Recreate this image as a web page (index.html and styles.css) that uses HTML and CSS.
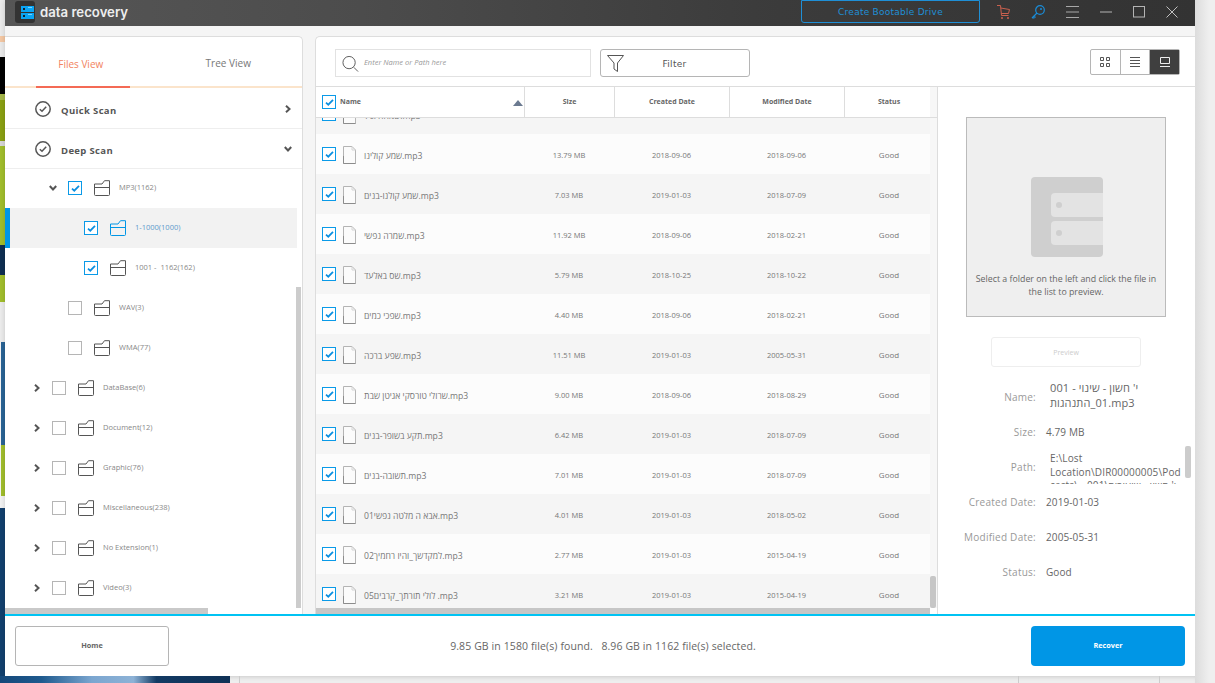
FILE: index.html
```html
<!DOCTYPE html>
<html lang="en">
<head>
<meta charset="utf-8">
<title>Data Recovery</title>
<link rel="stylesheet" href="styles.css">
</head>
<body>
<svg class="sprite" aria-hidden="true">
  <symbol id="folder" viewBox="0 0 16 16"><path d="M.5 4H8L10.5.7H15.5V14.5a1 1 0 0 1-1 1H1.500a1 1 0 0 1-1-1ZM.5 7.500H15.500" fill="none" stroke="currentColor"/></symbol>
  <symbol id="file" viewBox="0 0 13 18"><path d="M.5.5H9L12.500 4V17.500H.5Z" fill="#fbfbfb" stroke="#b4b4b4"/><path d="M.5 10V17.500H12.500" fill="none" stroke="#8c8c8c"/><path d="M9 .5V4H12.500" fill="none" stroke="#d4d4d4"/></symbol>
  <symbol id="tick" viewBox="0 0 10 8"><path d="M1 4.200 3.600 6.500 9 1" fill="none" stroke="currentColor" stroke-width="2"/></symbol>
  <symbol id="chev-r" viewBox="0 0 6 8"><path d="M1 .8 4.500 4 1 7.200" fill="none" stroke="currentColor" stroke-width="2"/></symbol>
  <symbol id="chev-d" viewBox="0 0 8 6"><path d="M.8 1 4 4.500 7.200 1" fill="none" stroke="currentColor" stroke-width="2"/></symbol>
  <symbol id="done" viewBox="0 0 16 16"><circle cx="8" cy="8" r="7.200" fill="none" stroke="currentColor" stroke-width="1.500"/><path d="M4.800 8.300 7 10.300 11.200 5.800" fill="none" stroke="currentColor" stroke-width="1.500"/></symbol>
</svg>

<div class="desktop">
  <div class="wall">
    <i class="w1"></i><i class="w2"></i><i class="w3"></i><i class="w4"></i><i class="w5"></i><i class="w6"></i><i class="w7"></i><i class="w8"></i><i class="w9"></i><i class="w10"></i><i class="w11"></i><i class="w12"></i><i class="w13"></i><i class="w14"></i><i class="w15"></i>
  </div>

  <div class="window">
    <header class="titlebar">
      <div class="logo">
        <svg width="13" height="13" viewBox="0 0 13 13"><rect width="13" height="6" fill="#0aa5f5"/><rect y="7" width="13" height="6" fill="#0aa5f5"/><rect x="2" y="2" width="2" height="2" fill="#123"/><rect x="2" y="9" width="2" height="2" fill="#123"/><rect x="7" y="1" width="4" height="1" fill="#7cd0f8"/><rect x="7" y="8" width="4" height="1" fill="#7cd0f8"/></svg>
      </div>
      <span class="brand">data recovery</span>
      <button class="bootable">Create Bootable Drive</button>
      <div class="tools">
        <svg class="tool" width="13" height="14" viewBox="0 0 13 14"><path d="M0 .5H3.500L4.500 10.500H11.500M3.700 3 12.500 4.500 11.500 8.500 4.300 8.500" fill="none" stroke="#c9604e"/><path d="M4 13H6M10 13H12" stroke="#c9604e" stroke-width="1.500"/></svg>
        <svg class="tool" width="14" height="14" viewBox="0 0 14 14"><circle cx="9" cy="5" r="4.300" fill="none" stroke="#1a8cd8" stroke-width="1.200"/><circle cx="10" cy="4" r="1" fill="#1a8cd8"/><path d="M6 8 1 13M1 13H3.500M3 11 4.500 12.500" fill="none" stroke="#1a8cd8" stroke-width="1.200"/></svg>
        <svg class="tool" width="13" height="12" viewBox="0 0 13 12"><path d="M0 .5H13M0 6H13M0 11.500H13" stroke="#a8a8a8"/></svg>
        <svg class="tool" width="12" height="12" viewBox="0 0 12 12"><path d="M0 6H12" stroke="#b4b4b4"/></svg>
        <svg class="tool" width="12" height="12" viewBox="0 0 12 12"><rect x=".5" y=".5" width="11" height="10.500" fill="none" stroke="#b4b4b4"/></svg>
        <svg class="tool" width="12" height="12" viewBox="0 0 12 12"><path d="M.5.5 11.500 11.500M11.500.5.5 11.500" stroke="#c0c0c0"/></svg>
      </div>
    </header>

    <main class="main">
      <aside class="side">
        <div class="tabs">
          <div class="tab active">Files View</div>
          <div class="tab">Tree View</div>
        </div>
        <div class="scan"><svg class="scan-ico"><use href="#done"/></svg><b>Quick Scan</b><svg class="scan-chev-r"><use href="#chev-r"/></svg></div>
        <div class="scan"><svg class="scan-ico"><use href="#done"/></svg><b>Deep Scan</b><svg class="scan-chev-d"><use href="#chev-d"/></svg></div>
        <div class="tree">
          <div class="node lv2"><svg class="arrow-d"><use href="#chev-d"/></svg><span class="cb on"><svg><use href="#tick"/></svg></span><svg class="fold"><use href="#folder"/></svg><span>MP3(1162)</span></div>
          <div class="node lv3 sel"><span class="cb on"><svg><use href="#tick"/></svg></span><svg class="fold"><use href="#folder"/></svg><span>1-1000(1000)</span></div>
          <div class="node lv3"><span class="cb on"><svg><use href="#tick"/></svg></span><svg class="fold"><use href="#folder"/></svg><span>1001 -&nbsp; 1162(162)</span></div>
          <div class="node lv2"><span class="cb"></span><svg class="fold"><use href="#folder"/></svg><span>WAV(3)</span></div>
          <div class="node lv2"><span class="cb"></span><svg class="fold"><use href="#folder"/></svg><span>WMA(77)</span></div>
          <div class="node lv1"><svg class="arrow-r"><use href="#chev-r"/></svg><span class="cb"></span><svg class="fold"><use href="#folder"/></svg><span>DataBase(6)</span></div>
          <div class="node lv1"><svg class="arrow-r"><use href="#chev-r"/></svg><span class="cb"></span><svg class="fold"><use href="#folder"/></svg><span>Document(12)</span></div>
          <div class="node lv1"><svg class="arrow-r"><use href="#chev-r"/></svg><span class="cb"></span><svg class="fold"><use href="#folder"/></svg><span>Graphic(76)</span></div>
          <div class="node lv1"><svg class="arrow-r"><use href="#chev-r"/></svg><span class="cb"></span><svg class="fold"><use href="#folder"/></svg><span>Miscellaneous(238)</span></div>
          <div class="node lv1"><svg class="arrow-r"><use href="#chev-r"/></svg><span class="cb"></span><svg class="fold"><use href="#folder"/></svg><span>No Extension(1)</span></div>
          <div class="node lv1"><svg class="arrow-r"><use href="#chev-r"/></svg><span class="cb"></span><svg class="fold"><use href="#folder"/></svg><span>Video(3)</span></div>
          <div class="tree-thumb"></div>
        </div>
        <div class="side-hbar"></div>
      </aside>

      <section class="content">
        <div class="toolbar">
          <div class="search">
            <svg width="17" height="18" viewBox="0 0 18 18"><circle cx="7.500" cy="7.500" r="6.500" fill="none" stroke="#555"/><path d="M12.500 12.500 17 17" stroke="#555"/></svg>
            <span>Enter Name or Path here</span>
          </div>
          <button class="filter">
            <svg width="17" height="17" viewBox="0 0 17 17"><path d="M.5.5H16.500L10.500 8V16.500L7 14V8Z" fill="none" stroke="#555"/></svg>
            <span>Filter</span>
          </button>
          <div class="views">
            <div class="view"><svg width="10" height="10" viewBox="0 0 10 10"><path d="M.5.5H3.500V3.500H.5ZM6.500.5H9.500V3.500H6.500ZM.5 6.500H3.500V9.500H.5ZM6.500 6.500H9.500V9.500H6.500Z" fill="none" stroke="#555"/></svg></div>
            <div class="view"><svg width="10" height="10" viewBox="0 0 10 10"><path d="M0 .5H10M0 3.500H10M0 6.500H10M0 9.500H10" stroke="#555"/></svg></div>
            <div class="view current"><svg width="10" height="10" viewBox="0 0 10 10"><path d="M.5.5H9.500V6.500H.5Z" fill="none" stroke="#eee"/><path d="M0 9.500H10" stroke="#eee"/></svg></div>
          </div>
        </div>

        <div class="split">
          <div class="table">
            <div class="thead">
              <div class="th th-name"><span class="cb on"><svg><use href="#tick"/></svg></span><span>Name</span><i class="sort"></i></div>
              <div class="th">Size</div>
              <div class="th">Created Date</div>
              <div class="th">Modified Date</div>
              <div class="th th-last">Status</div>
            </div>
            <div class="tbody">
              <div class="rows">
                <div class="row"><div class="td-name"><span class="cb on"><svg><use href="#tick"/></svg></span><svg class="doc"><use href="#file"/></svg><span>שמחה וגיל.mp3</span></div><div class="td"></div><div class="td"></div><div class="td"></div><div class="td"></div></div>
                <div class="row"><div class="td-name"><span class="cb on"><svg><use href="#tick"/></svg></span><svg class="doc"><use href="#file"/></svg><span>שמע קולינו.mp3</span></div><div class="td">13.79 MB</div><div class="td">2018-09-06</div><div class="td">2018-09-06</div><div class="td">Good</div></div>
                <div class="row"><div class="td-name"><span class="cb on"><svg><use href="#tick"/></svg></span><svg class="doc"><use href="#file"/></svg><span>שמע קולנו-בנים.mp3</span></div><div class="td">7.03 MB</div><div class="td">2019-01-03</div><div class="td">2018-07-09</div><div class="td">Good</div></div>
                <div class="row"><div class="td-name"><span class="cb on"><svg><use href="#tick"/></svg></span><svg class="doc"><use href="#file"/></svg><span>שמרה נפשי.mp3</span></div><div class="td">11.92 MB</div><div class="td">2018-09-06</div><div class="td">2018-02-21</div><div class="td">Good</div></div>
                <div class="row"><div class="td-name"><span class="cb on"><svg><use href="#tick"/></svg></span><svg class="doc"><use href="#file"/></svg><span>שס באלעד.mp3</span></div><div class="td">5.79 MB</div><div class="td">2018-10-25</div><div class="td">2018-10-22</div><div class="td">Good</div></div>
                <div class="row"><div class="td-name"><span class="cb on"><svg><use href="#tick"/></svg></span><svg class="doc"><use href="#file"/></svg><span>שפכי כמים.mp3</span></div><div class="td">4.40 MB</div><div class="td">2018-09-06</div><div class="td">2018-02-21</div><div class="td">Good</div></div>
                <div class="row"><div class="td-name"><span class="cb on"><svg><use href="#tick"/></svg></span><svg class="doc"><use href="#file"/></svg><span>שפע ברכה.mp3</span></div><div class="td">11.51 MB</div><div class="td">2019-01-03</div><div class="td">2005-05-31</div><div class="td">Good</div></div>
                <div class="row"><div class="td-name"><span class="cb on"><svg><use href="#tick"/></svg></span><svg class="doc"><use href="#file"/></svg><span>שרולי טורסקי אגיטן שבת.mp3</span></div><div class="td">9.00 MB</div><div class="td">2018-09-06</div><div class="td">2018-08-29</div><div class="td">Good</div></div>
                <div class="row"><div class="td-name"><span class="cb on"><svg><use href="#tick"/></svg></span><svg class="doc"><use href="#file"/></svg><span>תקע בשופר-בנים.mp3</span></div><div class="td">6.42 MB</div><div class="td">2019-01-03</div><div class="td">2018-07-09</div><div class="td">Good</div></div>
                <div class="row"><div class="td-name"><span class="cb on"><svg><use href="#tick"/></svg></span><svg class="doc"><use href="#file"/></svg><span>תשובה-בנים.mp3</span></div><div class="td">7.01 MB</div><div class="td">2019-01-03</div><div class="td">2018-07-09</div><div class="td">Good</div></div>
                <div class="row"><div class="td-name"><span class="cb on"><svg><use href="#tick"/></svg></span><svg class="doc"><use href="#file"/></svg><span>01אבא ה מלטה נפשי.mp3</span></div><div class="td">4.01 MB</div><div class="td">2019-01-03</div><div class="td">2018-05-02</div><div class="td">Good</div></div>
                <div class="row"><div class="td-name"><span class="cb on"><svg><use href="#tick"/></svg></span><svg class="doc"><use href="#file"/></svg><span>02למקדשך_והיו רחמיך.mp3</span></div><div class="td">2.77 MB</div><div class="td">2019-01-03</div><div class="td">2015-04-19</div><div class="td">Good</div></div>
                <div class="row"><div class="td-name"><span class="cb on"><svg><use href="#tick"/></svg></span><svg class="doc"><use href="#file"/></svg><span>05לולי תורתך_קרבים .mp3</span></div><div class="td">3.21 MB</div><div class="td">2019-01-03</div><div class="td">2015-04-19</div><div class="td">Good</div></div>
              </div>
              <div class="table-thumb"></div>
            </div>
            <div class="table-hbar"></div>
          </div>

          <div class="preview">
            <div class="pv-box">
              <div class="pv-icon">
                <div class="pv-slot"><i></i></div>
                <div class="pv-slot"><i></i></div>
              </div>
              <p>Select a folder on the left and click the file in the list to preview.</p>
            </div>
            <button class="pv-btn">Preview</button>
            <dl class="info">
              <dt>Name:</dt><dd class="inset">י' חשון - שינוי - 001 01_התנהגות.mp3</dd>
              <dt>Size:</dt><dd>4.79 MB</dd>
              <dt>Path:</dt><dd class="inset path">E:\Lost Location\DIR00000005\Podcasts\ י' חשון - שיעורים\001 - שינוי</dd>
              <dt>Created Date:</dt><dd>2019-01-03</dd>
              <dt>Modified Date:</dt><dd>2005-05-31</dd>
              <dt>Status:</dt><dd>Good</dd>
            </dl>
            <div class="path-thumb"></div>
          </div>
        </div>
      </section>
    </main>

    <footer class="footer">
      <button class="home">Home</button>
      <div class="summary">9.85 GB in 1580 file(s) found. &nbsp; 8.96 GB in 1162 file(s) selected.</div>
      <button class="recover">Recover</button>
    </footer>
  </div>

  <div class="gutter"></div>
  <div class="floor">
    <div class="floor-pic"></div>
    <div class="floor-a"></div>
    <div class="floor-b"></div>
    <div class="floor-c"></div>
  </div>
</div>
</body>
</html>
```
FILE: styles.css
```css
* { box-sizing: border-box; }
html, body { margin: 0; padding: 0; }
body { font-family: "Open Sans", "Noto Sans", "DejaVu Sans", sans-serif; color: #666; background: #eee; overflow: hidden; }
button { font: inherit; padding: 0; background: none; }
.sprite { display: none; }
svg { display: block; }

.desktop { width: 1215px; height: 683px; display: grid; grid-template-columns: 5px 1190px 20px; grid-template-rows: 676px 7px; overflow: hidden; }

/* desktop wallpaper visible at left edge */
.wall { display: flex; flex-direction: column; }
.wall i { display: block; }
.w1 { height: 36px; background: #ececec; }
.w2 { height: 6px; background: #f6c9a4; }
.w3 { height: 15px; background: #ececec; }
.w4 { height: 37px; background: #000; }
.w5 { height: 6px; background: #a6b84a; }
.w6 { height: 41px; background: #8aa012; }
.w7 { height: 5px; background: #d8d8d8; }
.w8 { height: 99px; background: #a2bf2c; }
.w9 { height: 30px; background: #0f2f52; }
.w10 { height: 27px; background: #a2bf2c; }
.w11 { height: 40px; background: #ededed; }
.w12 { height: 103px; background: linear-gradient(#f4f4f4 0 0) left / 1px 100% no-repeat, #2a6496; }
.w13 { height: 51px; background: linear-gradient(#f4f4f4 0 0) left / 1px 100% no-repeat, #a2bf2c; }
.w14 { height: 12px; background: #f4f4f4; }
.w15 { height: 168px; background: #12406e; }

.window { display: flex; flex-direction: column; background: #fff; box-shadow: 0 0 6px rgba(0,0,0,.18); min-height: 0; }

/* title bar */
.titlebar { height: 26px; flex: none; display: flex; align-items: center; padding-left: 10px; background: linear-gradient(90deg, #565656, #4c4c4c 30%, #3b3b3b 65%, #333); }
.logo { width: 20px; height: 22px; margin-top: -2px; background: #333; border-radius: 3px; display: flex; align-items: center; justify-content: flex-end; padding-right: 1px; }
.brand { margin-left: 5px; width: 88px; white-space: nowrap; font-family: Inter, "Open Sans", sans-serif; font-weight: 600; font-size: 13.200px; color: #eee; margin-top: -2px; }
.bootable { margin-left: 673px; width: 179px; height: 23px; margin-top: -3px; border: 1px solid #1f8fd6; border-radius: 0 0 3px 3px; color: #1f8fd6; font-family: "DejaVu Sans", sans-serif; font-size: 9px; letter-spacing: .25px; text-align: center; }
.tools { display: flex; align-items: center; margin-left: 17px; gap: 21px; }
.tool { margin-top: -3px; }

/* main area */
.main { flex: none; height: 588px; display: flex; gap: 12px; padding-top: 10px; background: #f5f5f5; min-height: 0; }

/* left pane */
.side { width: 298px; flex: none; display: flex; flex-direction: column; background: #fff; border-top: 1px solid #ddd; border-right: 1px solid #ddd; border-top-right-radius: 5px; min-height: 0; }
.tabs { height: 51px; flex: none; display: flex; border-bottom: 2px solid #fbe4cb; position: relative; }
.tab { flex: 1; display: flex; align-items: center; justify-content: center; font-size: 10px; color: #777; margin-bottom: 2px; padding-top: 4px; }
.tab.active { color: #f2835f; padding-left: 2px; margin-bottom: 0; padding-top: 5px; }
.tab.active::after { content: ""; position: absolute; left: 31px; bottom: -2px; width: 94px; height: 2px; background: #f46a55; }

.scan { height: 41px; margin-bottom: -1px; flex: none; display: flex; align-items: center; border-bottom: 1px solid #eee; padding-left: 30px; color: #555; }
.scan b { margin-left: 10px; margin-top: 4px; font-size: 9.500px; font-weight: 700; letter-spacing: .35px; }
.scan-ico { width: 16px; height: 16px; margin-top: 2px; }
.scan-chev-r { width: 6px; height: 8px; margin-left: auto; margin-right: 11px; margin-top: 2px; }
.scan-chev-d { width: 8px; height: 6px; margin-left: auto; margin-right: 10px; margin-top: 2px; }

.tree { flex: 1; min-height: 0; position: relative; overflow: hidden; padding-right: 5px; }
.node { height: 40px; display: flex; align-items: center; font-size: 7.500px; color: #888; }
.node > span:last-child { margin-top: -2px; }
.lv1 { padding-left: 29px; }
.lv2 { padding-left: 63px; }
.lv3 { padding-left: 79px; }
.lv2:has(.arrow-d) { padding-left: 44px; }
.sel { background: #f2f2f2; border-left: 5px solid #0096e6; padding-left: 74px; color: #5d9bcc; }
.sel .fold { color: #0096e6; }
.arrow-r { width: 6px; height: 8px; margin-right: 12px; color: #555; }
.arrow-d { width: 8px; height: 6px; margin-right: 11px; color: #555; }
.fold { width: 16px; height: 16px; margin: 0 9px 0 12px; color: #555; }
.cb { width: 14px; height: 14px; flex: none; display: flex; align-items: center; justify-content: center; border: 1px solid #b5b5b5; background: #fff; }
.cb.on { border-color: #0a9ae8; color: #0a8fe0; }
.cb svg { width: 9px; height: 7px; }
.tree-thumb { position: absolute; right: 1px; top: 119px; width: 5px; height: 321px; background: #ccc; }
.side-hbar { height: 6px; flex: none; width: 203px; background: #c9c9c9; }

/* right pane */
.content { flex: 1; min-width: 0; display: flex; flex-direction: column; background: #fff; border-top: 1px solid #ddd; border-left: 1px solid #ddd; border-top-left-radius: 5px; }
.toolbar { height: 50px; flex: none; display: flex; align-items: flex-start; padding: 12px 15px 0 19px; border-bottom: 1px solid #ddd; }
.search { width: 256px; height: 28px; display: flex; align-items: center; gap: 5px; padding-left: 6px; border: 1px solid #e2e2e2; }
.search svg { margin-top: 2px; }
.search span { font-size: 7.500px; font-style: italic; color: #999; margin-top: -2px; }
.filter { width: 150px; height: 28px; margin-left: 9px; border: 1px solid #b5b5b5; border-radius: 3px; display: flex; align-items: center; padding-left: 6px; color: #555; }
.filter span { flex: 1; text-align: center; font-family: "DejaVu Sans", sans-serif; font-size: 9px; letter-spacing: .3px; padding-right: 24px; padding-top: 2px; }
.views { margin-left: auto; width: 90px; display: flex; height: 26px; border: 1px solid #b5b5b5; border-radius: 2px; }
.view { flex: 1; display: flex; align-items: center; justify-content: center; border-right: 1px solid #b5b5b5; }
.view:last-child { border-right: 0; }
.view.current { background: #3f3f3f; }

.split { flex: 1; min-height: 0; display: flex; }
.table { width: 622px; flex: none; display: flex; flex-direction: column; border-right: 1px solid #ddd; min-height: 0; }
.thead { height: 31px; flex: none; display: grid; grid-template-columns: 209px 90px 115px 115px 85px; border-bottom: 1px solid #ddd; font-size: 7px; font-weight: 700; color: #666; background: linear-gradient(#f7f7f7 0 0) right / 7px 100% no-repeat; padding-right: 7px; }
.th { display: flex; align-items: center; justify-content: center; border-right: 1px solid #ddd; padding-bottom: 2px; }
.th-last { border-right: 0; padding-left: 3px; }
.th-name { justify-content: flex-start; padding-left: 6px; gap: 4px; padding-bottom: 0; }
.th-name > span:nth-child(2) { margin-top: -2px; }
.sort { margin-left: auto; margin-right: 1px; width: 0; height: 0; border: 5px solid transparent; border-top: 0; border-bottom: 6px solid #6b7a90; margin-top: 2px; }

.tbody { flex: 1; min-height: 0; overflow: hidden; position: relative; background: #f7f7f7; }
.rows { width: 614px; margin-top: -24px; }
.row { height: 40px; display: grid; grid-template-columns: 208px 90px 115px 115px 86px; font-size: 7.500px; color: #777; background: #fcfcfc; }
.row:nth-child(odd) { background: #f5f5f5; }
.td, .td-name { display: flex; align-items: center; }
.td { justify-content: center; padding-top: 1px; }
.td:last-child { font-size: 8px; padding-left: 4px; }
.td-name { padding-left: 6px; font-size: 8.600px; }
.td-name > span:last-child { margin-top: 4px; }
.doc { width: 13px; height: 18px; margin: 2px 8px 0 7px; flex: none; }
.table-thumb { position: absolute; right: 1px; bottom: 0; width: 6px; height: 32px; background: #c6c6c6; border-radius: 2px; }
.table-hbar { height: 6px; flex: none; width: 614px; background: #c6c6c6; }

/* preview pane */
.preview { flex: 1; min-width: 0; display: flex; flex-direction: column; align-items: center; padding: 30px 1px 0 0; position: relative; }
.pv-box { width: 200px; height: 200px; flex: none; background: #efefef; border: 1px solid #bbb; display: flex; flex-direction: column; align-items: center; padding-top: 59px; }
.pv-icon { width: 72px; height: 80px; background: #cfcfcf; border-radius: 4px; margin-left: 1px; display: flex; flex-direction: column; align-items: flex-end; gap: 4px; padding-top: 16px; }
.pv-slot { width: 52px; height: 24px; background: #e3e3e3; border-radius: 4px 0 0 4px; display: flex; align-items: center; padding-left: 5px; }
.pv-slot i { width: 6px; height: 6px; border-radius: 50%; background: #cfcfcf; }
.pv-box p { margin: 16px 0 0; width: 190px; text-align: center; font-size: 8.800px; line-height: 13px; color: #666; }
.pv-btn { width: 150px; height: 30px; flex: none; margin-top: 20px; border: 1px solid #eee; border-radius: 3px; font-size: 7px; color: #ccc; }
.info { width: 100%; flex: none; margin: 12px 0 0; display: grid; grid-template-columns: 98px 1fr; grid-auto-rows: 35px; column-gap: 10px; font-size: 10px; align-items: center; }
.info dt { text-align: right; color: #999; letter-spacing: .25px; }
.info dd { margin: 0; color: #666; padding-right: 12px; letter-spacing: .1px; }
.info dd.inset { padding-left: 4px; line-height: 15px; }
.info dd:first-of-type { font-size: 11px; padding-bottom: 4px; }
.info dd.path { height: 35px; overflow: hidden; line-height: 13.500px; padding-top: 3px; overflow-wrap: anywhere; align-self: start; letter-spacing: .15px; }
.path-thumb { position: absolute; left: 247px; top: 359px; width: 6px; height: 32px; background: #ccc; border-radius: 2px; }

/* footer */
.footer { flex: 1; min-height: 0; display: flex; align-items: center; padding: 0 10px; border-top: 2px solid #00c3f3; background: #fff; }
.home, .recover { width: 154px; height: 40px; flex: none; font-size: 7.300px; font-weight: 700; border-radius: 3px; padding-bottom: 2px; }
.home { border: 1px solid #b5b5b5; color: #666; }
.recover { border: 0; background: #0096e6; color: #fff; border-radius: 4px; }
.summary { flex: 1; text-align: center; padding-left: 6px; font-size: 10.500px; letter-spacing: .1px; color: #666; }

/* what shows around the window */
.gutter { grid-column: 3; grid-row: 1 / 3; background: linear-gradient(90deg, #dcdcdc, #efefef 70%); }
.floor { grid-column: 1 / 3; display: flex; background: #eee; box-shadow: inset 0 4px 4px -3px rgba(0,0,0,.15); }
.floor-pic { width: 230px; background: linear-gradient(90deg, #15487a, #1e5a8e 18%, #7ba6d0 40%, #8db2d6 58%, #123a63 68%, #0f3156); }
.floor-a { width: 10px; border-right: 1px solid #ccc; }
.floor-b { width: 779px; border-right: 1px solid #ccc; }
.floor-c { width: 141px; border-right: 1px solid #ccc; }
```
